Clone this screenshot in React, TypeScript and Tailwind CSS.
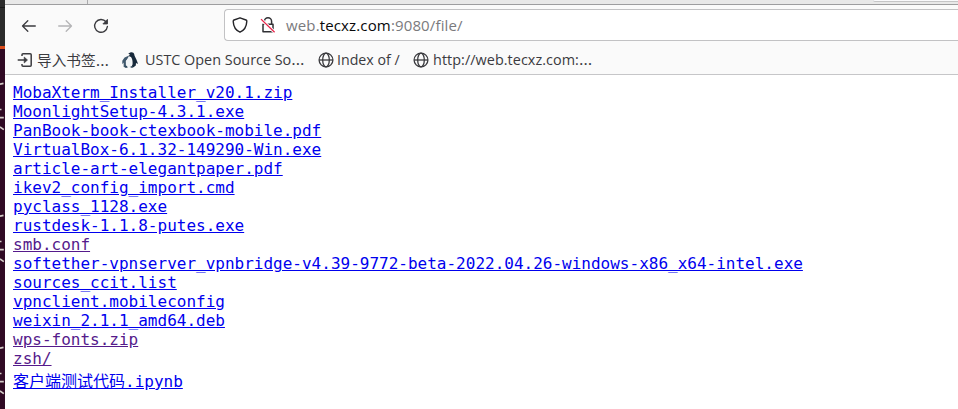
import React from "react";

const files: { name: string; visited?: boolean }[] = [
  { name: "MobaXterm_Installer_v20.1.zip" },
  { name: "MoonlightSetup-4.3.1.exe" },
  { name: "PanBook-book-ctexbook-mobile.pdf" },
  { name: "VirtualBox-6.1.32-149290-Win.exe" },
  { name: "article-art-elegantpaper.pdf" },
  { name: "ikev2_config_import.cmd" },
  { name: "pyclass_1128.exe" },
  { name: "rustdesk-1.1.8-putes.exe" },
  { name: "smb.conf", visited: true },
  { name: "softether-vpnserver_vpnbridge-v4.39-9772-beta-2022.04.26-windows-x86_x64-intel.exe" },
  { name: "sources_ccit.list" },
  { name: "vpnclient.mobileconfig" },
  { name: "weixin_2.1.1_amd64.deb" },
  { name: "wps-fonts.zip", visited: true },
  { name: "zsh/", visited: true },
];

const Globe = () => (
  <svg className="size-4 shrink-0" viewBox="0 0 16 16" fill="none" stroke="#3b3b3f" strokeWidth="1.3">
    <circle cx="8" cy="8" r="6.9" />
    <ellipse cx="8" cy="8" rx="3.3" ry="6.9" />
    <path d="M1.1 8h13.8" />
  </svg>
);

const Penguin = () => (
  <svg className="size-4 shrink-0" viewBox="0 0 16 16">
    <path d="M6.3 1.6 8.3.5c2-.7 3.6.3 4 1.9.2 1.7 1.1 2.9 2.1 5 .8 1.6 1.3 3.2 1.6 4.6l-2-1-.2 2.6-2.3 1.7-2.4.3 1.4-3.2c.3-3-.1-5.3-1.5-7.3L6.4 4 8 2.8z" fill="#17293b" />
    <path d="M6.5 3.8 2.6 5.4.3 8.7v3.6l1.3-1.8.1 4.6 2.5.6L3.8 9l3.1-3.7z" fill="#41596d" />
    <path d="M6.6 4.8c2.1.9 3.4 3.4 3 6.6-.3 2.2-1.4 3.5-2.7 4H4.6c-.8-1.8-1-4.3-.3-6.5z" fill="#f1f4f6" />
    <path d="m3.2 13.9 1.6-.2 1 1.7-2.3.5zM7.6 14.9l2.9-.8.8.8-1.2.9z" fill="#31495b" />
  </svg>
);

/* Tops of the repeated glyph slivers in the terminal beside the window */
const markOffsets = [0, 132, 264];

function DesktopEdge() {
  return (
    <aside className="relative h-full w-[5px] shrink-0 bg-[#300a24]">
      <div className="h-[46px] bg-[#2b2b2b] pt-[7px]"><div className="h-px bg-[#171717]" /></div>
      <div className="h-[3px] bg-[#d94c1a]" />
      <svg className="absolute inset-0" width="5" height="409" fill="none" stroke="#d4ccc8" strokeWidth="1.7">
        {markOffsets.map((y) => (
          <path key={y} transform={`translate(0 ${y})`} d="M0 84.2 3.5 83.4M0 109.5h1.5M0 117.6h3.8M0 127l3.8 2.6" />
        ))}
      </svg>
    </aside>
  );
}

function Toolbar() {
  return (
    <div className="flex h-[43px] pt-1">
      <nav className="flex h-[34px] w-[219px] shrink-0 items-center pl-4">
        <svg className="size-4" viewBox="0 0 16 16" fill="none" stroke="#3b3b3f" strokeWidth="1.3" strokeLinecap="round" strokeLinejoin="round"><path d="M14.3 8H1.5M6.8 2.7 1.5 8l5.3 5.3" /></svg>
        <svg className="ml-5 size-4" viewBox="0 0 16 16" fill="none" stroke="#b4b4b6" strokeWidth="1.3" strokeLinecap="round" strokeLinejoin="round"><path d="M1.7 8h12.8M9.2 2.7 14.5 8l-5.3 5.3" /></svg>
        <svg className="ml-5 size-4" viewBox="0 0 16 16" fill="none" stroke="#3b3b3f" strokeWidth="1.4" strokeLinecap="round"><path d="M13 3.8A6.4 6.4 0 1 0 14.4 8.5" /><path d="M14.4 1.8v4.1h-4.1z" fill="#3b3b3f" strokeWidth="1" strokeLinejoin="round" /></svg>
      </nav>
      <div className="flex h-[32px] grow items-center rounded-l border border-r-0 border-[#c2c2c4] bg-white pl-[7px]">
        <svg className="size-4" viewBox="0 0 16 16" fill="none" stroke="#252529" strokeWidth="1.4" strokeLinejoin="round"><path d="M8 .8 14 3c.7.3.9.7.8 1.4C14.6 9 12.3 13.3 8 15.2 3.7 13.3 1.4 9 1.2 4.4c0-.7.2-1.1.8-1.4z" /></svg>
        <svg className="ml-3 size-4" viewBox="0 0 16 16" fill="none" stroke="#303034" strokeWidth="1.5" strokeLinejoin="round"><path d="M4.4 7V4.4a3.6 3.6 0 0 1 7.2 0V7M3 7.2h10v7.6H3z" /><path d="m.7 2 14 13.3" stroke="white" strokeWidth="3.2" /><path d="m1 2.1 13.6 13.1" stroke="#e82348" strokeWidth="1.3" /></svg>
        <div className="ml-[10px] whitespace-nowrap font-['Open_Sans',sans-serif] text-[15px] leading-8 tracking-[0.14px] text-[#7a7a7d]">
          web.<span className="font-medium text-[#08080a]">tecxz.com</span>:9080/file/
        </div>
      </div>
    </div>
  );
}

function Bookmarks() {
  return (
    <div className="flex h-[24px] items-center whitespace-nowrap pl-[12px] font-['Open_Sans','Noto_Sans_CJK_SC',sans-serif] text-[14.4px] leading-6 text-[#3b3b3f]">
      <svg className="size-4 shrink-0" viewBox="0 0 16 16" fill="none" stroke="#3b3b3f" strokeWidth="1.5" strokeLinejoin="round"><path d="M5 4V2.7c0-.6.4-1 1-1h7.2c.6 0 1 .4 1 1v10.6c0 .6-.4 1-1 1H6c-.6 0-1-.4-1-1V12M.7 8h8" /><path d="m7.2 5 3.3 3-3.3 3z" fill="#3b3b3f" strokeWidth=".6" /></svg>
      <span className="ml-1 w-[85px] text-[14.67px]">导入书签<span className="text-[17px] leading-none">…</span></span>
      <Penguin />
      <span className="ml-[7px] w-[173px]">USTC Open Source So<span className="text-[17px] leading-none">…</span></span>
      <Globe />
      <span className="ml-[3px] w-[76px] text-[14.2px]">Index of /</span>
      <Globe />
      <span className="ml-1 tracking-[0.05px]">http://web.tecxz.com:<span className="text-[17px] leading-none">…</span></span>
    </div>
  );
}

export default function App() {
  return (
    <div className="flex h-[409px] w-[958px] overflow-hidden bg-white">
      <DesktopEdge />
      <div className="flex min-w-0 grow flex-col">
        <header className="h-[75px] border-b border-[#c6c6c8] bg-[#fafafa]">
          <div className="flex h-[5px] border-b border-[#9d9d9f] bg-[#e8e8e8]">
            <div className="w-[83px] border-r border-[#aaaaac]" />
            <div className="ml-auto h-[2px] w-[85px] rounded-bl-sm border-b border-[#c5c5c6] bg-[#f9f9fb]" />
          </div>
          <Toolbar />
          <Bookmarks />
        </header>
        <main className="flex flex-col items-start pl-2 pt-2 font-['DejaVu_Sans_Mono','Noto_Sans_CJK_SC',monospace] text-[16px] leading-[19px]">
          {files.map((file) => (
            <a key={file.name} href="#" className={file.visited ? "whitespace-pre text-[#551a8b] underline" : "whitespace-pre text-[#0000ee] underline"}>{file.name}</a>
          ))}
          <a href="#" className="mt-1 whitespace-pre text-[#0000ee] underline">客户端测试代码.ipynb</a>
        </main>
      </div>
    </div>
  );
}
